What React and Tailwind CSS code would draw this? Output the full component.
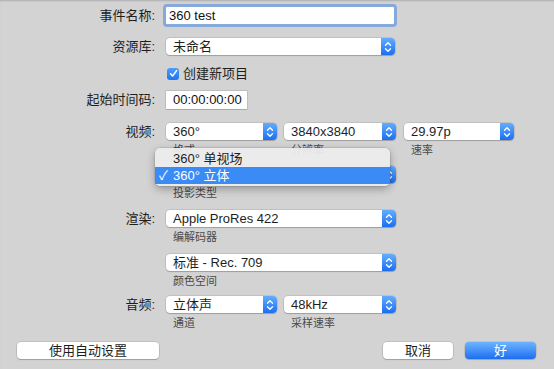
import React from "react";

const FONT = { fontFamily: '"Liberation Sans", "Noto Sans CJK SC", sans-serif' };

function Stepper() {
  return (
    <div className="w-[14px] h-full rounded-r-[4px] bg-gradient-to-b from-[#62adff] to-[#1b6ef0] flex items-center justify-center shrink-0">
      <svg width="8" height="12" viewBox="0 0 8 12" fill="none" stroke="white" strokeWidth="1.3" strokeLinecap="round" strokeLinejoin="round">
        <path d="M1.5 4.2 L4 1.7 L6.5 4.2" />
        <path d="M1.5 7.8 L4 10.3 L6.5 7.8" />
      </svg>
    </div>
  );
}

function Popup({ w, text }) {
  return (
    <div
      className={`${w} h-[17px] flex bg-white rounded-[4px] shadow-[0_0_0_0.5px_rgba(0,0,0,0.18),0_1px_1px_rgba(0,0,0,0.18)]`}
    >
      <div className="flex-1 pl-[7px] text-[13px] leading-[17px] text-[#1e1e1e] whitespace-nowrap">{text}</div>
      <Stepper />
    </div>
  );
}

function Label({ children }) {
  return (
    <div className="w-[157px] pr-[2px] text-right text-[13px] text-[#1e1e1e] shrink-0 whitespace-nowrap">
      {children}
    </div>
  );
}

function Sub({ children }) {
  return <div className="pl-[7px] mt-[3px] text-[11px] leading-[14px] text-[#4a4a4a] whitespace-nowrap">{children}</div>;
}

export default function App() {
  return (
    <div className="w-[554px] h-[369px] bg-[#d3d3d3] relative overflow-hidden shadow-[inset_0_2px_2px_-1px_rgba(0,0,0,0.18)]" style={FONT}>
      {/* Event name */}
      <div className="flex items-center mt-[4px] h-[23px]">
        <Label>事件名称:</Label>
        <div className="ml-[6px] w-[234px] h-[23px] rounded-[4px] border-[3px] border-[#86a9dc] bg-white">
          <div className="pl-[3px] text-[13px] leading-[17px] text-[#111]">360 test</div>
        </div>
      </div>

      {/* Library */}
      <div className="flex items-center mt-[11px] h-[17px]">
        <Label>资源库:</Label>
        <div className="ml-[9px]">
          <Popup w="w-[229px]" text="未命名" />
        </div>
      </div>

      {/* Checkbox */}
      <div className="flex items-center mt-[12px] h-[13px] pl-[167px]">
        <div className="w-[12px] h-[12px] rounded-[3px] bg-gradient-to-b from-[#4a9dfb] to-[#1f74ef] flex items-center justify-center">
          <svg width="9" height="9" viewBox="0 0 9 9" fill="none" stroke="white" strokeWidth="1.5" strokeLinecap="round" strokeLinejoin="round">
            <path d="M1.5 4.8 L3.6 7 L7.6 1.6" />
          </svg>
        </div>
        <div className="ml-[4px] text-[13px] leading-[13px] text-[#1e1e1e]">创建新项目</div>
      </div>

      {/* Timecode */}
      <div className="flex items-center mt-[11px] h-[18px]">
        <Label>起始时间码:</Label>
        <div className="ml-[9px] w-[81px] h-[18px] bg-white shadow-[0_0_0_0.5px_rgba(0,0,0,0.2),0_1px_0_rgba(0,0,0,0.1)] pl-[7px] text-[13px] leading-[18px] text-[#111]">
          00:00:00:00
        </div>
      </div>

      {/* Video */}
      <div className="flex items-start mt-[14px]">
        <div className="h-[17px] flex items-center"><Label>视频:</Label></div>
        <div className="ml-[9px] flex gap-[7px]">
          <div>
            <Popup w="w-[111px]" text="360°" />
            <Sub>格式</Sub>
          </div>
          <div>
            <Popup w="w-[112px]" text="3840x3840" />
            <Sub>分辨率</Sub>
          </div>
          <div className="ml-[1px]">
            <Popup w="w-[110px]" text="29.97p" />
            <Sub>速率</Sub>
          </div>
        </div>
      </div>

      {/* Projection */}
      <div className="flex items-start mt-[9px]">
        <div className="w-[157px] shrink-0" />
        <div className="ml-[9px]">
          <Popup w="w-[230px]" text="360° 立体" />
          <Sub>投影类型</Sub>
        </div>
      </div>

      {/* Render */}
      <div className="flex items-start mt-[10px]">
        <div className="h-[17px] flex items-center"><Label>渲染:</Label></div>
        <div className="ml-[9px]">
          <Popup w="w-[230px]" text="Apple ProRes 422" />
          <Sub>编解码器</Sub>
        </div>
      </div>

      {/* Color space */}
      <div className="flex items-start mt-[10px]">
        <div className="w-[157px] shrink-0" />
        <div className="ml-[9px]">
          <Popup w="w-[230px]" text="标准 - Rec. 709" />
          <Sub>颜色空间</Sub>
        </div>
      </div>

      {/* Audio */}
      <div className="flex items-start mt-[8px]">
        <div className="h-[17px] flex items-center"><Label>音频:</Label></div>
        <div className="ml-[9px] flex gap-[7px]">
          <div>
            <Popup w="w-[111px]" text="立体声" />
            <Sub>通道</Sub>
          </div>
          <div>
            <Popup w="w-[112px]" text="48kHz" />
            <Sub>采样速率</Sub>
          </div>
        </div>
      </div>

      {/* Buttons */}
      <div className="flex items-center mt-[12px] pl-[17px] pr-[18px]">
        <div className="w-[142px] h-[17px] bg-white rounded-[4px] shadow-[0_0_0_0.5px_rgba(0,0,0,0.18),0_1px_1px_rgba(0,0,0,0.18)] text-center text-[13px] leading-[17px] text-[#1e1e1e]">
          使用自动设置
        </div>
        <div className="flex-1" />
        <div className="w-[70px] h-[17px] bg-white rounded-[4px] shadow-[0_0_0_0.5px_rgba(0,0,0,0.18),0_1px_1px_rgba(0,0,0,0.18)] text-center text-[13px] leading-[17px] text-[#1e1e1e]">
          取消
        </div>
        <div className="ml-[12px] w-[71px] h-[17px] rounded-[4px] bg-gradient-to-b from-[#6cb3ff] to-[#1b6ef0] shadow-[0_0_0_0.5px_rgba(0,0,0,0.15),0_1px_1px_rgba(0,0,0,0.15)] text-center text-[13px] leading-[17px] text-white">
          好
        </div>
      </div>

      {/* Open menu */}
      <div className="absolute left-[155px] top-[148px] w-[235px] h-[38px] rounded-[5px] bg-[#ececec]/95 shadow-[0_0_0_0.5px_rgba(0,0,0,0.15),0_3px_8px_rgba(0,0,0,0.3)] pt-[2px]">
        <div className="h-[17px] pl-[18px] text-[13px] leading-[17px] text-[#1e1e1e] whitespace-nowrap">360° 单视场</div>
        <div className="h-[17px] bg-[#3a8bf6] flex items-center text-white text-[13px] leading-[17px] whitespace-nowrap">
          <span className="w-[18px] pl-[4px]">✓</span>
          <span>360° 立体</span>
        </div>
      </div>
    </div>
  );
}
